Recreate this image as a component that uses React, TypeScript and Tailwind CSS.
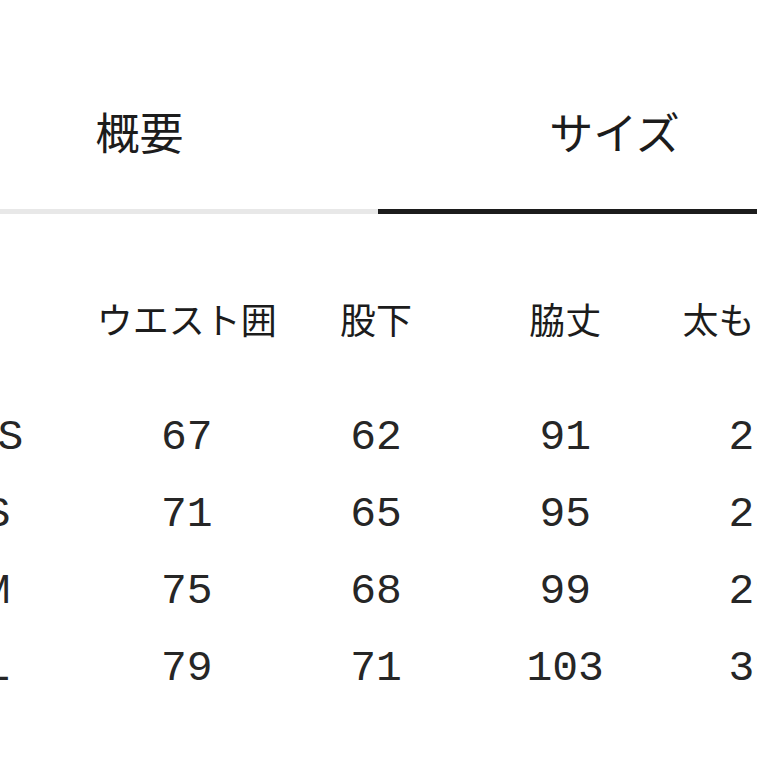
const columns = ["", "ウエスト囲", "股下", "脇丈", "太もも囲"];

const rows = [
  ["XS", "67", "62", "91", "25"],
  ["S", "71", "65", "95", "27"],
  ["M", "75", "68", "99", "29"],
  ["L", "79", "71", "103", "31"],
];

const jp = { fontFamily: '"Noto Sans CJK JP", "Noto Sans", sans-serif' };
const mono = { fontFamily: '"Liberation Mono", monospace' };

export default function App() {
  return (
    <div className="relative h-[757px] w-[757px] overflow-hidden bg-white text-[#1c1c1c]">
      <div className="ml-[-97px] w-[946px]">
        {/* tabs */}
        <div className="flex" style={jp}>
          <div className="flex h-[214px] w-[475px] items-center justify-center border-b-[5px] border-[#e8e8e8] pr-[2px] pt-[52px] text-[44px] leading-none">
            概要
          </div>
          <div className="flex h-[214px] w-[471px] items-center justify-center border-b-[5px] border-[#1c1c1c] pl-[2px] pt-[52px] text-[44px] leading-none">
            サイズ
          </div>
        </div>

        {/* size table */}
        <div className="mt-[65px] grid grid-cols-5" style={jp}>
          {columns.map((c, i) => (
            <div key={i} className="flex h-[77px] items-center justify-center whitespace-nowrap text-[36px] leading-none">
              {c}
            </div>
          ))}
        </div>
        <div className="mt-[43px]">
          {rows.map((r) => (
            <div key={r[0]} className="grid grid-cols-5 text-[#262626]" style={mono}>
              {r.map((v, i) => (
                <div key={i} className="flex h-[77px] items-center justify-center text-[43px] leading-none">
                  {v}
                </div>
              ))}
            </div>
          ))}
        </div>
      </div>
    </div>
  );
}
